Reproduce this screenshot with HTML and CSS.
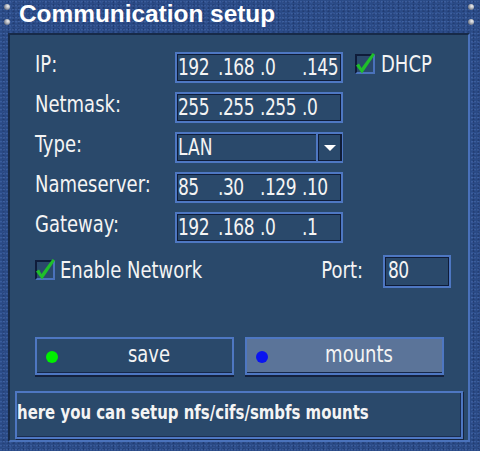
FILE: index.html
```html
<!DOCTYPE html>
<html>
<head>
<meta charset="utf-8">
<title>Communication setup</title>
<link rel="stylesheet" href="styles.css">
</head>
<body>
<div class="window">
  <div class="titlebar">
    <div class="dots"><span class="dot"></span><span class="dot"></span></div>
    <div class="title">Communication setup</div>
    <div class="dots right"><span class="dot"></span><span class="dot"></span></div>
  </div>
  <div class="panel">
    <div class="form">
      <div class="row">
        <span class="label">IP:</span>
        <div class="field"><span class="seg">192</span><span class="seg">.168</span><span class="seg">.0</span><span class="seg">.145</span></div>
        <div class="check dhcp">
          <span class="box"><svg viewBox="0 0 20 20" width="20" height="20"><polygon points="1,11.5 4,9.5 6.5,14 17.5,-1 20,0.5 7,19.5" fill="#1fbf2a"/></svg></span>
          <span class="label">DHCP</span>
        </div>
      </div>
      <div class="row">
        <span class="label">Netmask:</span>
        <div class="field"><span class="seg">255</span><span class="seg">.255</span><span class="seg">.255</span><span class="seg">.0</span></div>
      </div>
      <div class="row">
        <span class="label">Type:</span>
        <div class="field select"><span class="value">LAN</span><span class="arrow"><span class="tri"></span></span></div>
      </div>
      <div class="row">
        <span class="label">Nameserver:</span>
        <div class="field"><span class="seg">85</span><span class="seg">.30</span><span class="seg">.129</span><span class="seg">.10</span></div>
      </div>
      <div class="row">
        <span class="label">Gateway:</span>
        <div class="field"><span class="seg">192</span><span class="seg">.168</span><span class="seg">.0</span><span class="seg">.1</span></div>
      </div>
      <div class="options">
        <div class="check">
          <span class="box"><svg viewBox="0 0 20 20" width="20" height="20"><polygon points="1,11.5 4,9.5 6.5,14 17.5,-1 20,0.5 7,19.5" fill="#1fbf2a"/></svg></span>
          <span class="text">Enable Network</span>
        </div>
        <div class="port">
          <span class="text">Port:</span>
          <div class="field portfield"><span class="seg">80</span></div>
        </div>
      </div>
      <div class="buttons">
        <div class="button"><span class="led green"></span><span class="btext">save</span></div>
        <div class="button selected"><span class="led blue"></span><span class="btext">mounts</span></div>
      </div>
    </div>
    <div class="status"><span class="stext">here you can setup nfs/cifs/smbfs mounts</span></div>
  </div>
</div>
</body>
</html>
```
FILE: styles.css
```css
html, body {
  margin: 0;
  padding: 0;
}
body {
  width: 480px;
  height: 451px;
  overflow: hidden;
  font-family: "DejaVu Sans Condensed", "DejaVu Sans", sans-serif;
  color: #f4f4f4;
}
.window {
  width: 480px;
  height: 451px;
  background-color: #2a4a86;
  background-image:
    radial-gradient(circle at 30% 40%, rgba(120,160,230,0.22) 0.6px, transparent 1.3px),
    radial-gradient(circle at 70% 70%, rgba(10,25,60,0.28) 0.7px, transparent 1.4px),
    radial-gradient(circle at 50% 50%, rgba(90,130,210,0.15) 0.8px, transparent 1.5px);
  background-size: 3px 4px, 5px 3px, 7px 5px;
  display: flex;
  flex-direction: column;
}
.titlebar {
  height: 33px;
  display: flex;
  align-items: flex-start;
}
.dots {
  display: flex;
  flex-direction: column;
  gap: 9px;
  margin: 4px 0 0 4px;
  width: 7px;
}
.dots.right {
  margin: 4px 0 0 auto;
  padding-right: 5px;
}
.dot {
  width: 6px;
  height: 6px;
  border-radius: 50%;
  background: radial-gradient(circle at 65% 35%, #f4f4f4 0, #b8bcc4 35%, #6c7280 75%, #3a4050 100%);
}
.title {
  margin-left: 8px;
  font-family: "Liberation Sans", Arial, sans-serif;
  font-weight: bold;
  font-size: 24.4px;
  line-height: 28px;
  color: #ffffff;
}
.panel {
  margin-left: 8px;
  width: 462px;
  height: 409px;
  box-sizing: border-box;
  background: #2a496b;
  border-top: 2px solid #172a48;
  border-left: 2px solid #172a48;
  border-right: 2px solid #4a72bb;
  border-bottom: 2px solid #4a72bb;
  display: flex;
  flex-direction: column;
}
.form {
  padding: 17px 16px 0 25px;
  display: flex;
  flex-direction: column;
  gap: 9px;
}
.row {
  height: 31px;
  display: flex;
  align-items: flex-start;
}
.label, .seg, .value, .text, .btext, .stext {
  display: inline-block;
  transform: scaleY(1.17);
  white-space: nowrap;
}
.label {
  font-size: 20px;
  line-height: 24px;
}
.row > .label {
  width: 140px;
  flex: none;
}
.field {
  box-sizing: border-box;
  width: 168px;
  height: 31px;
  border: 2px solid #4e77c2;
  box-shadow: inset 1px 1px 0 #0f1c38, inset -1px -1px 0 #0f1c38;
  padding-left: 1px;
  display: flex;
  align-items: flex-start;
}
.seg, .value {
  font-size: 19px;
  line-height: 27px;
  letter-spacing: -0.5px;
}
.seg {
  width: 42px;
  flex: none;
}
.seg:first-child {
  width: 40px;
}
.select .value {
  flex: 1;
  letter-spacing: 0;
}
.select .arrow {
  box-sizing: border-box;
  width: 26px;
  height: 27px;
  border-left: 2px solid #4e77c2;
  box-shadow: inset 1px 1px 0 #0f1c38, inset -1px -1px 0 #0f1c38;
  display: flex;
  align-items: center;
  justify-content: center;
  margin-right: -1px;
}
.tri {
  width: 0;
  height: 0;
  border-left: 6px solid transparent;
  border-right: 6px solid transparent;
  border-top: 6px solid #ffffff;
}
.check {
  display: flex;
  align-items: flex-start;
  gap: 5px;
}
.dhcp {
  margin-left: 12px;
  margin-top: 2px;
  gap: 6px;
}
.dhcp .label {
  margin-top: -2px;
}
.box {
  box-sizing: border-box;
  width: 20px;
  height: 20px;
  border-top: 2px solid #0f1c3a;
  border-left: 2px solid #0f1c3a;
  border-right: 2px solid #4a72bb;
  border-bottom: 2px solid #4a72bb;
  position: relative;
  flex: none;
}
.box svg {
  position: absolute;
  left: -2px;
  top: -2px;
  overflow: visible;
}
.options {
  margin-top: 3px;
  height: 33px;
  display: flex;
  align-items: flex-start;
}
.options .box {
  margin-top: 5px;
}
.text {
  font-size: 20px;
  line-height: 30px;
}
.port {
  margin-left: auto;
  margin-right: 1px;
  display: flex;
  align-items: flex-start;
  gap: 20px;
}
.portfield {
  width: 68px;
  height: 33px;
  padding-left: 3px;
}
.portfield .seg {
  line-height: 26px;
}
.buttons {
  margin-top: 40px;
  display: flex;
  gap: 11px;
}
.button {
  box-sizing: border-box;
  width: 199px;
  height: 38px;
  border: 2px solid #4e77c2;
  box-shadow: 0 2px 0 #14223e, inset 0 -1px 0 #16284a;
  display: flex;
  align-items: flex-start;
  padding-left: 9px;
  padding-right: 2px;
}
.button.selected {
  background: #5b7499;
}
.led {
  width: 12px;
  height: 12px;
  border-radius: 50%;
  flex: none;
  margin-top: 12px;
}
.led.green { background: #00f000; }
.led.blue { background: #0a14f0; }
.btext {
  flex: 1;
  text-align: center;
  margin-left: 10px;
  font-size: 20px;
  line-height: 31px;
}
.status {
  margin: auto 5px 1px 5px;
  box-sizing: border-box;
  height: 48px;
  border: 2px solid #4e77c2;
  box-shadow: inset -1px -1px 0 #1a2d50, 1px 1px 0 #15243f;
}
.stext {
  font-weight: bold;
  font-size: 16.6px;
  line-height: 40px;
}
```
